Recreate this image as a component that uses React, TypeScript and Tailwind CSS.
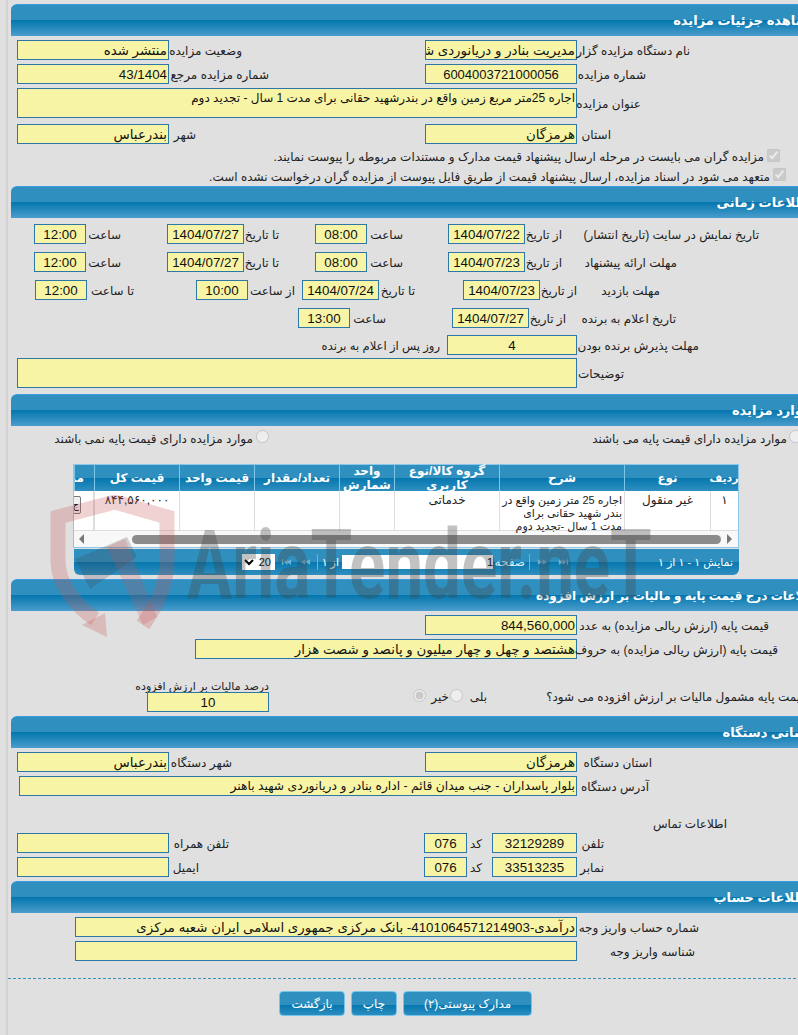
import React from "react";

const FONT = "font-['Liberation_Sans','DejaVu_Sans',sans-serif]";

function Head({ title, className = "" }: { title: string; className?: string }) {
  return (
    <div
      dir="rtl"
      className={"flex h-[32px] w-[806px] items-center rounded-tl-[6px] border-t border-[#3c9ade] bg-[linear-gradient(#2f90c0_0%,#2f90c0_49%,#0577ae_50%,#4b9dcc_100%)] pt-[1px] text-[13px] font-bold whitespace-nowrap text-white " + className}
    >
      {title}
    </div>
  );
}

function Box({ children, className = "", num = false }: { children?: React.ReactNode; className?: string; num?: boolean }) {
  return (
    <div
      dir="rtl"
      className={"h-[20px] shrink-0 overflow-hidden border border-[#2b78a8] bg-[#f7f5a5] text-[13.33px] leading-[19px] whitespace-nowrap text-[#111] " + (num ? "text-center " : "pr-[1px] text-right ") + className}
    >
      {children}
    </div>
  );
}

function Lbl({ children, className = "" }: { children: React.ReactNode; className?: string }) {
  return (
    <div dir="rtl" className={"shrink-0 pt-[2px] text-right text-[12px] leading-[20px] whitespace-nowrap text-[#222] " + className}>
      {children}
    </div>
  );
}

function Row({ children, className = "" }: { children: React.ReactNode; className?: string }) {
  return <div className={"flex h-[20px] items-center " + className}>{children}</div>;
}

function Col({ children, className = "" }: { children?: React.ReactNode; className?: string }) {
  return (
    <div dir="rtl" className={"flex h-full shrink-0 items-center justify-center border-l border-[#7cc6ea] text-center text-[12px] leading-[14px] font-bold text-white " + className}>
      {children}
    </div>
  );
}

function Cell({ children, className = "" }: { children?: React.ReactNode; className?: string }) {
  return (
    <div dir="rtl" className={"h-full shrink-0 border-l border-[#dddddd] pt-[3px] text-center text-[12px] leading-[13px] text-[#222] " + className}>
      {children}
    </div>
  );
}

function Btn({ children, className = "" }: { children: React.ReactNode; className?: string }) {
  return (
    <div dir="rtl" className={"flex h-[25px] items-center justify-center rounded-[4px] border border-[#74c4ea] bg-[linear-gradient(#2f90c0_0%,#2f90c0_55%,#0577ae_56%,#2b8dc0_100%)] text-[12px] text-white " + className}>
      {children}
    </div>
  );
}

function Nav({ flip = false, bar = false, className = "" }: { flip?: boolean; bar?: boolean; className?: string }) {
  return (
    <svg viewBox="0 0 12 8" className={"h-[8px] w-[11px] shrink-0 fill-[#6fb2d4] " + (flip ? "-scale-x-100 " : "") + className}>
      {bar ? <rect x="1" y="1" width="1.5" height="6" /> : <path d="M1 4 L6 1 V7 Z" />}
      <path d="M6 4 L11 1 V7 Z" />
      {bar ? <path d="M3 4 L7 1 V7 Z" /> : null}
    </svg>
  );
}

export default function App() {
  return (
    <div className={"relative h-[1035px] w-[798px] overflow-hidden bg-[#e0e0e0] " + FONT}>
      <div className="ml-[6px] h-[1035px] w-[820px] border-l-2 border-[#d2d2d2] pt-[4px] pl-[3px]">
        {/* section 1 */}
        <Head title="مشاهده جزئیات مزایده" />
        <div className="flow-root h-[150px]">
          <Row className="mt-[4px]">
            <Box className="ml-[6px] w-[152px]">منتشر شده</Box>
            <Lbl className="w-[73px]">وضعیت مزایده</Lbl>
            <Box className="ml-[183px] w-[152px]">مدیریت بنادر و دریانوردی شهید باهنر</Box>
            <Lbl className="w-[113px]">نام دستگاه مزایده گزار</Lbl>
          </Row>
          <Row className="mt-[4px]">
            <Box className="ml-[6px] w-[152px]">43/1404</Box>
            <Lbl className="w-[100px]">شماره مزایده مرجع</Lbl>
            <Box num className="ml-[156px] w-[152px] !text-[13px]">6004003721000056</Box>
            <Lbl className="w-[69px]">شماره مزایده</Lbl>
          </Row>
          <div className="mt-[4px] flex h-[30px] items-center">
            <Box className="ml-[6px] !h-[30px] w-[560px] !text-[12px]">اجاره 25متر مربع زمین واقع در بندرشهید حقانی برای مدت 1 سال - تجدید دوم</Box>
            <Lbl className="w-[64px]">عنوان مزایده</Lbl>
          </div>
          <Row className="mt-[6px]">
            <Box className="ml-[6px] w-[152px]">بندرعباس</Box>
            <Lbl className="w-[27px]">شهر</Lbl>
            <Box className="ml-[229px] w-[152px]">هرمزگان</Box>
            <Lbl className="w-[34px]">استان</Lbl>
          </Row>
          <div dir="rtl" className="mt-[3px] flex h-[20px] w-[769px] items-center text-[12px] text-[#222]">
            <input type="checkbox" checked disabled readOnly className="m-0 h-[13px] w-[13px] -translate-y-[2px]" />
            <span className="mr-[3px] whitespace-nowrap">مزایده گران می بایست در مرحله ارسال پیشنهاد قیمت مدارک و مستندات مربوطه را پیوست نمایند.</span>
          </div>
          <div dir="rtl" className="flex h-[19px] w-[775px] items-center text-[12px] text-[#222]">
            <input type="checkbox" checked disabled readOnly className="m-0 h-[13px] w-[13px] -translate-y-[2px]" />
            <span className="mr-[3px] whitespace-nowrap">متعهد می شود در اسناد مزایده، ارسال پیشنهاد قیمت از طریق فایل پیوست از مزایده گران درخواست نشده است.</span>
          </div>
        </div>

        {/* section 2 */}
        <Head title="اطلاعات زمانی" className="pr-[5px]" />
        <div className="flow-root h-[176px]">
          <Row className="mt-[6px]">
            <Box num className="ml-[23px] w-[52px]">12:00</Box>
            <Lbl className="w-[35px]">ساعت</Lbl>
            <Box num className="ml-[46px] w-[77px]">1404/07/27</Box>
            <Lbl className="w-[35px]">تا تاریخ</Lbl>
            <Box num className="ml-[36px] w-[52px]">08:00</Box>
            <Lbl className="w-[36px]">ساعت</Lbl>
            <Box num className="ml-[45px] w-[77px]">1404/07/22</Box>
            <Lbl className="w-[37px]">از تاریخ</Lbl>
            <Lbl className="ml-[30px] w-[167px]">تاریخ نمایش در سایت (تاریخ انتشار)</Lbl>
          </Row>
          <Row className="mt-[8px]">
            <Box num className="ml-[23px] w-[52px]">12:00</Box>
            <Lbl className="w-[35px]">ساعت</Lbl>
            <Box num className="ml-[46px] w-[77px]">1404/07/27</Box>
            <Lbl className="w-[35px]">تا تاریخ</Lbl>
            <Box num className="ml-[36px] w-[52px]">08:00</Box>
            <Lbl className="w-[36px]">ساعت</Lbl>
            <Box num className="ml-[45px] w-[77px]">1404/07/23</Box>
            <Lbl className="w-[37px]">از تاریخ</Lbl>
            <Lbl className="ml-[30px] w-[85px]">مهلت ارائه پیشنهاد</Lbl>
          </Row>
          <Row className="mt-[8px]">
            <Box num className="ml-[24px] w-[52px]">12:00</Box>
            <Lbl className="w-[47px]">تا ساعت</Lbl>
            <Box num className="ml-[62px] w-[52px]">10:00</Box>
            <Lbl className="w-[47px]">از ساعت</Lbl>
            <Box num className="ml-[7px] w-[77px]">1404/07/24</Box>
            <Lbl className="w-[36px]">تا تاریخ</Lbl>
            <Box num className="ml-[48px] w-[77px]">1404/07/23</Box>
            <Lbl className="w-[37px]">از تاریخ</Lbl>
            <Lbl className="ml-[30px] w-[53px]">مهلت بازدید</Lbl>
          </Row>
          <Row className="mt-[8px]">
            <Box num className="ml-[287px] w-[52px]">13:00</Box>
            <Lbl className="w-[36px]">ساعت</Lbl>
            <Box num className="ml-[66px] w-[77px]">1404/07/27</Box>
            <Lbl className="w-[37px]">از تاریخ</Lbl>
            <Lbl className="ml-[10px] w-[100px]">تاریخ اعلام به برنده</Lbl>
          </Row>
          <Row className="mt-[7px]">
            <Lbl className="ml-[304px] w-[125px] !text-[11.6px]">روز پس از اعلام به برنده</Lbl>
            <Box num className="ml-[7px] w-[130px]">4</Box>
            <Lbl className="w-[122px]">مهلت پذیرش برنده بودن</Lbl>
          </Row>
          <div className="mt-[3px] flex h-[30px] items-center">
            <Box className="ml-[6px] !h-[30px] w-[560px]" />
            <Lbl className="w-[47px]">توضیحات</Lbl>
          </div>
        </div>

        {/* section 3 */}
        <Head title="موارد مزایده" className="pr-[6px]" />
        <div className="flow-root h-[153px]">
          <Row className="mt-[2px]">
            <Lbl className="ml-[43px] w-[199px]">موارد مزایده دارای قیمت پایه نمی باشند</Lbl>
            <input type="radio" disabled className="m-0 ml-[3px] h-[13px] w-[13px] -translate-y-[2px]" />
            <Lbl className="ml-[323px] w-[195px]">موارد مزایده دارای قیمت پایه می باشند</Lbl>
            <input type="radio" disabled className="m-0 ml-[2px] h-[13px] w-[13px] -translate-y-[2px]" />
          </Row>
          <div className="mt-[16px] ml-[62px] h-[111px] w-[666px] overflow-hidden">
            <div className="h-[84px] border border-[#8cc6e8] bg-white">
              <div className="flex h-[26px] bg-[linear-gradient(#2f90c0_0%,#2f90c0_49%,#0577ae_50%,#2f8fc0_100%)]">
                <Col className="w-[20px] !justify-start overflow-hidden pr-[10px]">
                  <span className="w-[40px] shrink-0 text-right">مدارک</span>
                </Col>
                <Col className="w-[85px]">قیمت کل</Col>
                <Col className="w-[75px]">قیمت واحد</Col>
                <Col className="w-[85px]">تعداد/مقدار</Col>
                <Col className="w-[55px]">واحد شمارش</Col>
                <Col className="w-[105px]">گروه کالا/نوع کاربری</Col>
                <Col className="w-[125px]">شرح</Col>
                <Col className="w-[86px]">نوع</Col>
                <Col className="w-[28px] border-l-0 !text-[11px]">ردیف</Col>
              </div>
              <div className="flex h-[40px] border-b border-[#dddddd]">
                <div className="flex h-full w-[20px] shrink-0 justify-end overflow-hidden border-r border-[#dddddd] pt-[5px] pr-[12px]">
                  <div className="h-[18px] w-[30px] shrink-0 rounded-[2px] border border-[#777] bg-[#f0f0f0] pr-[1px] text-right text-[10px] leading-[16px]">ج</div>
                </div>
                <Cell className="w-[85px] tracking-[1px] text-[#4a3a30]">۸۴۴,۵۶۰,۰۰۰</Cell>
                <Cell className="w-[75px]" />
                <Cell className="w-[85px]" />
                <Cell className="w-[55px]" />
                <Cell className="w-[105px]">خدماتی</Cell>
                <Cell className="w-[125px] pr-[2px] !text-right !text-[11px] whitespace-nowrap">
                  اجاره 25 متر زمین واقع در
                  <br />
                  بندر شهید حقانی برای
                  <br />
                  مدت 1 سال -تجدید دوم
                </Cell>
                <Cell className="w-[86px]">غیر منقول</Cell>
                <Cell className="w-[28px]">۱</Cell>
              </div>
              <div className="flex h-[16px] items-center bg-[#f8f8f8]">
                <div className="ml-[5px] h-0 w-0 border-y-[5px] border-r-[5px] border-y-transparent border-r-[#777]" />
                <div className="ml-[48px] h-[9px] w-[589px] rounded-full bg-[#8b8b8b]" />
                <div className="ml-[6px] h-0 w-0 border-y-[5px] border-l-[5px] border-y-transparent border-l-[#777]" />
              </div>
            </div>
            <div className="mt-[1px] ml-[1px] flex h-[26px] items-center rounded-b-[6px] bg-[linear-gradient(#2f90c0_0%,#2f90c0_49%,#0577ae_50%,#2f8fc0_100%)] text-[11px] text-white">
              <select defaultValue="20" dir="rtl" className="ml-[168px] h-[16px] w-[33px] shrink-0 bg-white text-[11px] text-black">
                <option>20</option>
              </select>
              <Nav bar className="ml-[6px]" />
              <Nav className="ml-[8px]" />
              <div className="ml-[6px] h-[16px] w-px shrink-0 bg-[#6fb2d4]" />
              <span dir="rtl" className="ml-[6px] w-[15px] shrink-0 whitespace-nowrap">از ۱</span>
              <input readOnly value="1" dir="rtl" className="ml-[3px] h-[14px] w-[151px] shrink-0 bg-white text-right text-[11px] leading-[14px] text-black" />
              <span dir="rtl" className="ml-[4px] w-[28px] shrink-0 text-[12px] whitespace-nowrap text-[#d8eef8]">صفحه</span>
              <div className="ml-[4px] h-[16px] w-px shrink-0 bg-[#6fb2d4]" />
              <Nav flip className="ml-[7px]" />
              <Nav flip bar className="ml-[10px]" />
              <span dir="rtl" className="ml-[89px] w-[75px] shrink-0 text-right whitespace-nowrap">نمایش ۱ - ۱ از ۱</span>
            </div>
          </div>
        </div>

        {/* section 4 */}
        <Head title="اطلاعات درج قیمت پایه و مالیات بر ارزش افزوده" className="!w-[809px] !text-[12px]" />
        <div className="flow-root h-[105px]">
          <Row className="mt-[4px]">
            <Box className="ml-[414px] w-[152px]">844,560,000</Box>
            <Lbl className="w-[192px]">قیمت پایه (ارزش ریالی مزایده) به عدد</Lbl>
          </Row>
          <Row className="mt-[4px]">
            <Box className="ml-[184px] w-[382px]">هشتصد و چهل و چهار میلیون و پانصد و شصت هزار</Box>
            <Lbl className="w-[201px]">قیمت پایه (ارزش ریالی مزایده) به حروف</Lbl>
          </Row>
          <div className="mt-[18px] flex h-[15px] items-center">
            <Lbl className="ml-[123px] w-[135px] !text-[11px]">درصد مالیات بر ارزش افزوده</Lbl>
          </div>
          <div className="flex h-[20px] items-start">
            <Box num className="ml-[136px] w-[122px]">10</Box>
            <input type="radio" disabled checked readOnly className="m-0 -mt-[3px] ml-[144px] h-[13px] w-[13px]" />
            <Lbl className="-mt-[7px] ml-[3px] w-[20px]">خیر</Lbl>
            <input type="radio" disabled className="m-0 -mt-[3px] ml-[1px] h-[13px] w-[13px]" />
            <Lbl className="-mt-[7px] ml-[5px] w-[19px]">بلی</Lbl>
            <Lbl className="-mt-[7px] ml-[57px] w-[262px]">قیمت پایه مشمول مالیات بر ارزش افزوده می شود؟</Lbl>
          </div>
        </div>

        {/* section 5 */}
        <Head title="نشانی دستگاه" className="pr-[5px]" />
        <div className="flow-root h-[133px]">
          <Row className="mt-[4px]">
            <Box className="ml-[6px] w-[152px]">بندرعباس</Box>
            <Lbl className="w-[63px]">شهر دستگاه</Lbl>
            <Box className="ml-[193px] w-[152px]">هرمزگان</Box>
            <Lbl className="w-[75px]">استان دستگاه</Lbl>
          </Row>
          <Row className="mt-[4px]">
            <Box className="ml-[8px] w-[558px] !text-[12.3px]">بلوار پاسداران - جنب میدان قائم - اداره بنادر و دریانوردی شهید باهنر</Box>
            <Lbl className="w-[72px]">آدرس دستگاه</Lbl>
          </Row>
          <Row className="mt-[17px]">
            <Lbl className="ml-[640px] w-[76px]">اطلاعات تماس</Lbl>
          </Row>
          <Row>
            <Box className="ml-[6px] w-[152px]" />
            <Lbl className="w-[60px]">تلفن همراه</Lbl>
            <Box num className="ml-[195px] w-[43px]">076</Box>
            <Lbl className="w-[15px]">کد</Lbl>
            <Box num className="ml-[10px] w-[85px]">32129289</Box>
            <Lbl className="w-[27px]">تلفن</Lbl>
          </Row>
          <Row className="mt-[4px]">
            <Box className="ml-[6px] w-[152px]" />
            <Lbl className="w-[30px]">ایمیل</Lbl>
            <Box num className="ml-[225px] w-[43px]">076</Box>
            <Lbl className="w-[15px]">کد</Lbl>
            <Box num className="ml-[10px] w-[85px]">33513235</Box>
            <Lbl className="w-[27px]">نمابر</Lbl>
          </Row>
        </div>

        {/* section 6 */}
        <Head title="اطلاعات حساب" className="pr-[6px]" />
        <div className="flow-root">
          <Row className="mt-[4px]">
            <Box className="ml-[64px] w-[502px]">درآمدی-4101064571214903- بانک مرکزی جمهوری اسلامی ایران شعبه مرکزی</Box>
            <Lbl className="w-[122px]">شماره حساب واریز وجه</Lbl>
          </Row>
          <Row className="mt-[4px]">
            <Box className="ml-[64px] w-[502px]" />
            <Lbl className="w-[118px]">شناسه واریز وجه</Lbl>
          </Row>
          <div className="mt-[17px] -ml-[3px] border-t border-dashed border-[#3d8fbf]" />
          <div className="mt-[12px] ml-[268px] flex gap-[6px]">
            <Btn className="w-[66px]">بازگشت</Btn>
            <Btn className="w-[46px]">چاپ</Btn>
            <Btn className="w-[129px]">مدارک پیوستی(۲)</Btn>
          </div>
        </div>
      </div>

      {/* watermark lying over the page */}
      <div className="pointer-events-none absolute top-[495px] left-[45px] h-[150px] w-[600px]">
        <svg viewBox="0 0 135 150" className="absolute top-0 left-0 h-[150px] w-[135px]" fill="none">
          <path d="M13 44 V22 L70 7 L122 22 V66 C122 92 110 112 98 130" stroke="rgba(200,80,80,0.26)" strokeWidth="15" />
          <path d="M13 44 V66 C13 90 32 112 50 124" stroke="rgba(200,80,80,0.26)" strokeWidth="15" />
          <path d="M37 130 L60 118 L62 142 Z" fill="rgba(200,80,80,0.26)" />
          <path d="M30 64 L82 42 L92 62 L45 94 Z" fill="rgba(70,60,70,0.22)" />
          <path d="M62 52 L80 44 L112 122 L98 130 Z" fill="rgba(200,80,80,0.22)" />
        </svg>
        <div className="absolute top-[20px] left-[142px] origin-left scale-x-[0.7] font-['Roboto',sans-serif] text-[96px] leading-[100px] font-bold whitespace-nowrap text-[rgba(70,70,70,0.33)]">
          AriaTender.neT
        </div>
      </div>
    </div>
  );
}
